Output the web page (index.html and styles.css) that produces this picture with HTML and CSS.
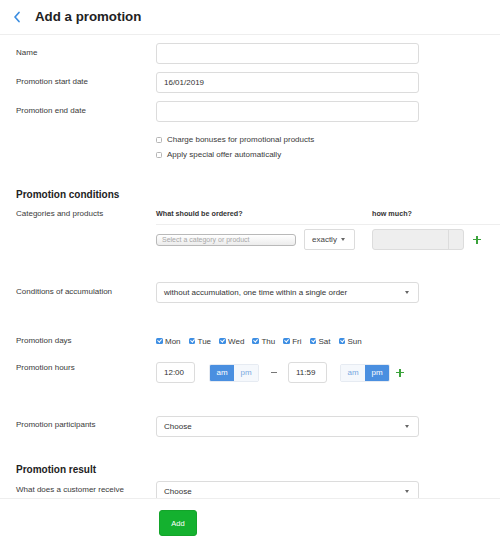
FILE: index.html
```html
<!DOCTYPE html>
<html>
<head>
<meta charset="utf-8">
<link rel="stylesheet" href="styles.css">
</head>
<body>
<div class="page">
  <header class="header">
    <svg class="back" width="8" height="12" viewBox="0 0 8 12"><polyline points="6,1.5 2,6 6,10.5" fill="none" stroke="#3b8de0" stroke-width="1.7" stroke-linecap="round" stroke-linejoin="round"/></svg>
    <h1 class="title">Add a promotion</h1>
  </header>
  <main class="content">
    <div class="row r-name">
      <div class="label">Name</div>
      <div class="input"></div>
    </div>
    <div class="row r-gap">
      <div class="label">Promotion start date</div>
      <div class="input">16/01/2019</div>
    </div>
    <div class="row r-gap">
      <div class="label">Promotion end date</div>
      <div class="input"></div>
    </div>
    <div class="checks">
      <label class="check"><span class="box"></span>Charge bonuses for promotional products</label>
      <label class="check"><span class="box"></span>Apply special offer automatically</label>
    </div>

    <h2 class="section s-cond">Promotion conditions</h2>
    <div class="cat">
      <div class="label cat-label">Categories and products</div>
      <div class="cat-body">
        <div class="cat-head">
          <div class="col-a">What should be ordered?</div>
          <div class="col-b"></div>
          <div class="col-c">how much?</div>
        </div>
        <div class="cat-ctrl">
          <div class="col-a"><div class="native">Select a category or product</div></div>
          <div class="col-b"><div class="small-select">exactly<span class="caret"></span></div></div>
          <div class="col-c"><div class="amount"><span class="amount-main"></span><span class="amount-unit"></span></div></div>
          <span class="plus"></span>
        </div>
      </div>
    </div>

    <div class="row r-accum">
      <div class="label">Conditions of accumulation</div>
      <div class="input select">without accumulation, one time within a single order<span class="caret"></span></div>
    </div>

    <div class="row r-days">
      <div class="label">Promotion days</div>
      <div class="days">
        <label class="day"><span class="cb"></span>Mon</label>
        <label class="day"><span class="cb"></span>Tue</label>
        <label class="day"><span class="cb"></span>Wed</label>
        <label class="day"><span class="cb"></span>Thu</label>
        <label class="day"><span class="cb"></span>Fri</label>
        <label class="day"><span class="cb"></span>Sat</label>
        <label class="day"><span class="cb"></span>Sun</label>
      </div>
    </div>

    <div class="row r-hours">
      <div class="label hours-label">Promotion hours</div>
      <div class="hours">
        <div class="time">12:00</div>
        <div class="toggle t1"><span class="opt on">am</span><span class="opt">pm</span></div>
        <span class="dash"></span>
        <div class="time">11:59</div>
        <div class="toggle t2"><span class="opt">am</span><span class="opt on">pm</span></div>
        <span class="plus plus-h"></span>
      </div>
    </div>

    <div class="row r-part">
      <div class="label">Promotion participants</div>
      <div class="input select">Choose<span class="caret"></span></div>
    </div>

    <h2 class="section s-result">Promotion result</h2>
    <div class="row r-recv">
      <div class="label">What does a customer receive</div>
      <div class="input select">Choose<span class="caret"></span></div>
    </div>
  </main>
  <footer class="footer">
    <button class="add">Add</button>
  </footer>
</div>
</body>
</html>
```
FILE: styles.css
```css
* { box-sizing: border-box; }
html, body { margin: 0; padding: 0; background: #fff; }
body {
  font-family: "Liberation Sans", Arial, sans-serif;
  font-size: 8px;
  color: #333;
}
.page {
  width: 500px;
  height: 550px;
  display: flex;
  flex-direction: column;
  overflow: hidden;
}
.header {
  height: 35px;
  flex: none;
  border-bottom: 1px solid #eeeeee;
  display: flex;
  align-items: center;
  padding-left: 13px;
}
.back { display: block; margin-top: -1px; }
.title {
  margin: 0 0 0 14px;
  font-size: 13.3px;
  font-weight: bold;
  color: #222;
  line-height: 16px;
}
.content {
  flex: 1;
  overflow: hidden;
  padding-top: 8px;
}
.row {
  display: flex;
  align-items: flex-start;
}
.r-gap { margin-top: 8px; }
.label {
  width: 156px;
  flex: none;
  padding-left: 16px;
  line-height: 12px;
  padding-top: 4px;
  color: #3a3a3a;
}
.input {
  width: 263px;
  height: 21px;
  border: 1px solid #dcdcdc;
  border-radius: 3px;
  padding: 0 7px;
  line-height: 19px;
  color: #333;
  position: relative;
}
.select { padding-right: 20px; }
.caret {
  position: absolute;
  right: 9px;
  top: 8px;
  width: 0;
  height: 0;
  border-left: 2.5px solid transparent;
  border-right: 2.5px solid transparent;
  border-top: 3px solid #666;
}
.checks {
  margin-top: 10px;
  padding-left: 156px;
}
.check {
  display: flex;
  align-items: center;
  height: 15px;
  color: #3a3a3a;
}
.box {
  width: 6px;
  height: 6px;
  border: 1px solid #b5b5b5;
  border-radius: 1.5px;
  margin-right: 5px;
  background: #fff;
}
.section {
  margin: 24px 0 0 16px;
  font-size: 10px;
  font-weight: bold;
  line-height: 14px;
  color: #222;
}
.s-cond { margin-top: 26px; }
.cat {
  display: flex;
  margin-top: 5px;
}
.cat-label { padding-top: 1px; }
.cat-body { flex: 1; }
.cat-head {
  display: flex;
  padding-top: 1px;
  height: 18px;
  border-bottom: 1px solid #eeeeee;
  font-size: 7.2px;
  font-weight: bold;
  color: #333;
  line-height: 12px;
}
.col-a { width: 148px; flex: none; }
.col-b { width: 68px; flex: none; }
.col-c { width: 92px; flex: none; }
.cat-ctrl {
  display: flex;
  align-items: center;
  margin-top: 4px;
  height: 21px;
}
.native {
  width: 140px;
  height: 12px;
  border: 1px solid #b9b9b9;
  border-radius: 3px;
  background: linear-gradient(#ffffff, #ececec);
  font-size: 7px;
  line-height: 10px;
  color: #a8a8a8;
  padding-left: 5px;
}
.small-select {
  width: 51px;
  height: 21px;
  border: 1px solid #dcdcdc;
  border-radius: 2px;
  line-height: 19px;
  padding-left: 7px;
  color: #444;
  position: relative;
}
.small-select .caret { right: 9px; }
.amount {
  width: 92px;
  height: 21px;
  display: flex;
  border: 1px solid #dcdcdc;
  border-radius: 3px;
  background: #eeeeee;
  overflow: hidden;
}
.amount-main { flex: 1; }
.amount-unit { width: 15px; border-left: 1px solid #dcdcdc; }
.plus {
  position: relative;
  width: 8px;
  height: 8px;
  margin-left: 9px;
  flex: none;
}
.plus::before, .plus::after {
  content: "";
  position: absolute;
  background: #3ba33b;
}
.plus::before { left: 0; top: 3.25px; width: 8px; height: 1.5px; }
.plus::after { left: 3.25px; top: 0; width: 1.5px; height: 8px; }
.r-accum { margin-top: 32px; }
.r-days { margin-top: 31px; }
.r-days .label { padding-top: 1px; }
.days {
  display: flex;
  align-items: center;
  height: 14px;
}
.day {
  display: flex;
  align-items: center;
  margin-right: 8px;
  color: #3a3a3a;
}
.cb {
  width: 6.5px;
  height: 6.5px;
  border-radius: 1.5px;
  background: #3d8ee3;
  margin-right: 2.5px;
  position: relative;
}
.cb::after {
  content: "";
  position: absolute;
  left: 2.1px;
  top: 0.5px;
  width: 1.5px;
  height: 3.4px;
  border-right: 1px solid #fff;
  border-bottom: 1px solid #fff;
  transform: rotate(40deg);
}
.r-hours { margin-top: 14px; }
.hours-label { padding-top: 0; }
.hours {
  display: flex;
  align-items: center;
  height: 21px;
}
.time {
  width: 39px;
  height: 21px;
  border: 1px solid #dcdcdc;
  border-radius: 3px;
  line-height: 19px;
  padding-left: 7px;
  color: #333;
}
.toggle {
  display: flex;
  height: 18px;
  width: 50px;
  border-radius: 2px;
  overflow: hidden;
  border: 1px solid #e6ebf2;
}
.t1 { margin-left: 14px; }
.t2 { margin-left: 13px; }
.opt {
  flex: 1;
  text-align: center;
  line-height: 16px;
  background: #f5f8fc;
  color: #79a8df;
}
.opt.on {
  background: #4a8fe0;
  color: #fff;
}
.dash {
  width: 6px;
  height: 1px;
  background: #777;
  margin: 0 11px 0 12px;
}
.plus-h { margin-left: 6px; }
.r-part { margin-top: 33px; }
.r-part .label { padding-top: 3px; }
.s-result { margin-top: 26px; }
.r-recv { margin-top: 4px; }
.r-recv .label { padding-top: 3px; }
.footer {
  height: 52px;
  flex: none;
  border-top: 1px solid #eeeeee;
  padding: 11px 0 0 159px;
  background: #fff;
}
.add {
  width: 38px;
  height: 26px;
  border: 1px solid #13a42a;
  border-radius: 3px;
  background: #14b12f;
  color: #fff;
  font-family: "Liberation Sans", Arial, sans-serif;
  font-size: 7.5px;
  padding: 0;
}
```
